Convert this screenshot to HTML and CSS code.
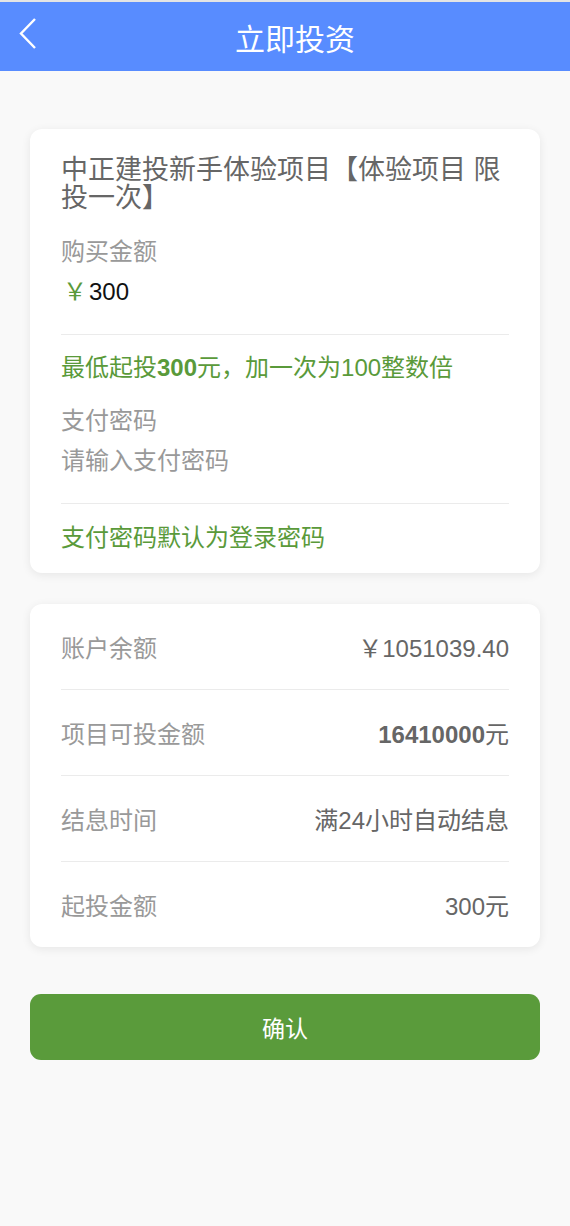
FILE: index.html
```html
<!DOCTYPE html>
<html lang="zh-CN">
<head>
    <meta charset="UTF-8">
    <meta name="viewport" content="width=device-width, initial-scale=1.0">
    <title>立即投资</title>
    <link rel="stylesheet" href="styles.css">
</head>
<body>
    <header class="top-bar">
        <a class="back" href="#">
            <svg width="20" height="34" viewBox="0 0 20 34">
                <path d="M16 2 L2 16.5 L16 31" fill="none" stroke="#fff" stroke-width="2.4"/>
            </svg>
        </a>
        <h1>立即投资</h1>
    </header>

    <div class="page">
        <div class="card form-card">
            <div class="project-title">中正建投新手体验项目【体验项目 限投一次】</div>

            <div class="field-label">购买金额</div>
            <div class="amount section"><span class="yen">￥</span>300</div>

            <div class="tip">最低起投<b>300</b>元，加一次为100整数倍</div>

            <div class="field-label pwd-label">支付密码</div>
            <div class="section pwd-section">
                <input class="pwd-input" type="password" placeholder="请输入支付密码">
            </div>

            <div class="tip hint">支付密码默认为登录密码</div>
        </div>

        <div class="card info-card">
            <div class="info-row">
                <span class="info-label">账户余额</span>
                <span class="info-value">￥1051039.40</span>
            </div>
            <div class="info-row">
                <span class="info-label">项目可投金额</span>
                <span class="info-value"><b>16410000</b>元</span>
            </div>
            <div class="info-row">
                <span class="info-label">结息时间</span>
                <span class="info-value">满24小时自动结息</span>
            </div>
            <div class="info-row">
                <span class="info-label">起投金额</span>
                <span class="info-value">300元</span>
            </div>
        </div>

        <button class="confirm">确认</button>
    </div>
</body>
</html>
```

FILE: styles.css
```css
body {
    margin: 0;
    font-family: "Liberation Sans", "Noto Sans CJK SC", sans-serif;
    background-color: #f9f9f9;
    color: #666;
    border-top: 2px solid #e4e4e4;
}

/* Header */
.top-bar {
    height: 69px;
    padding-left: 20px;
    background-color: #588cff;
    display: flex;
    align-items: center;
    justify-content: center;
    position: relative;
}

.top-bar h1 {
    margin: 0;
    font-size: 30px;
    font-weight: normal;
    color: #fff;
}

.back {
    position: absolute;
    left: 19px;
    top: 15px;
    display: flex;
}

.page {
    padding: 58px 30px 0;
}

.card {
    background-color: #fff;
    border-radius: 12px;
    box-shadow: 0 2px 10px rgba(0, 0, 0, 0.08);
}

/* Form card */
.form-card {
    padding: 27px 31px 19px;
}

.project-title {
    font-size: 27px;
    line-height: 28px;
    color: #666;
}

.field-label {
    margin-top: 24px;
    font-size: 24px;
    line-height: 32px;
    color: #999;
}

.section {
    padding-bottom: 26px;
    border-bottom: 1px solid #ebebeb;
}

.amount {
    margin-top: 8px;
    font-size: 24px;
    line-height: 32px;
    color: #111;
}

.yen {
    margin-left: 2px;
    margin-right: 2px;
    color: #5a9a3a;
}

.tip {
    margin-top: 17px;
    font-size: 24px;
    line-height: 32px;
    color: #5a9a3a;
}

.pwd-label {
    margin-top: 21px;
}

.pwd-section {
    margin-top: 8px;
}

.pwd-input {
    display: block;
    width: 100%;
    height: 32px;
    padding: 0;
    border: none;
    outline: none;
    font-family: inherit;
    font-size: 24px;
    color: #333;
    background: transparent;
}

.pwd-input::placeholder {
    color: #999;
}

.hint {
    margin-top: 18px;
}

/* Info card */
.info-card {
    margin-top: 31px;
    padding: 0 31px;
}

.info-row {
    box-sizing: border-box;
    height: 86px;
    display: flex;
    align-items: center;
    justify-content: space-between;
    font-size: 24px;
    border-bottom: 1px solid #ebebeb;
}

.info-row:last-child {
    height: 85px;
    border-bottom: none;
}

.info-label {
    color: #999;
}

.info-value {
    color: #666;
}

/* Button */
.confirm {
    display: block;
    width: 100%;
    height: 66px;
    margin-top: 47px;
    border: none;
    border-radius: 11px;
    background-color: #5a9b3b;
    color: #fff;
    font-family: inherit;
    font-size: 23px;
    cursor: pointer;
}
```
